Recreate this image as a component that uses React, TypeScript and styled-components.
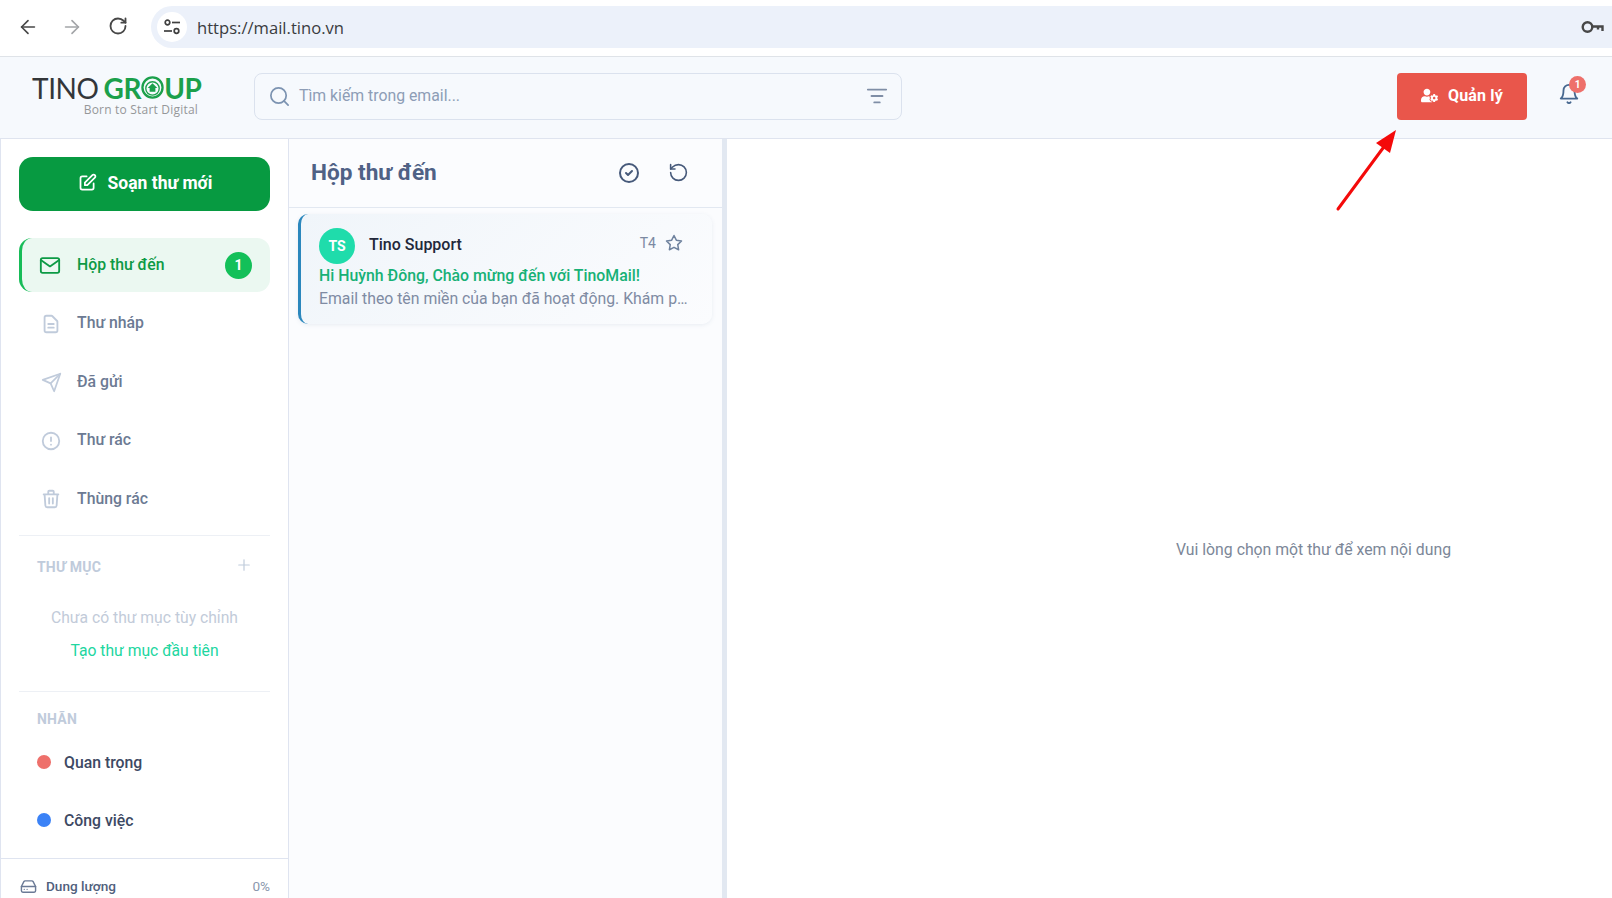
import React from "react";
import styled, { createGlobalStyle } from "styled-components";
import { ArrowLeft, ArrowRight, RotateCw, Search, ListFilter, Plus, RotateCcw } from "lucide-react";
import { FaUserCog } from "react-icons/fa";
import { FiBell, FiHardDrive, FiMail, FiSend, FiStar } from "react-icons/fi";
import {
  HiOutlineCheckCircle,
  HiOutlineDocumentText,
  HiOutlineExclamationCircle,
  HiOutlinePencilAlt,
  HiOutlineTrash,
} from "react-icons/hi";

const GlobalStyle = createGlobalStyle`
  html, body { margin: 0; padding: 0; height: 100%; overflow: hidden; background: #fff; }
  * { box-sizing: border-box; }
  body { font-family: Roboto, "Noto Sans", sans-serif; }
`;

const Page = styled.div`
  position: relative;
  width: 1612px;
  height: 898px;
  display: flex;
  flex-direction: column;
  overflow: hidden;
`;

const BrowserBar = styled.div`
  height: 57px;
  flex: none;
  display: flex;
  align-items: center;
  padding: 0 0 2px 17px;
  background: #fff;
  border-bottom: 1px solid #dfe3e8;
`;

const NavButton = styled.span<{ $muted?: boolean; $gap: number }>`
  width: 22px;
  height: 22px;
  margin-right: ${({ $gap }) => $gap}px;
  display: flex;
  color: ${({ $muted }) => ($muted ? "#a3a5a8" : "#474747")};
`;

const UrlPill = styled.div`
  flex: 1;
  height: 42px;
  display: flex;
  align-items: center;
  padding: 0 8px 0 6px;
  border-radius: 21px 0 0 21px;
  background: #ecf1fa;
`;

const SiteBadge = styled.span`
  width: 30px;
  height: 30px;
  flex: none;
  display: flex;
  align-items: center;
  justify-content: center;
  border-radius: 50%;
  background: #fff;
`;

const UrlText = styled.span`
  margin: 1px 0 0 10px;
  flex: 1;
  font-family: "Open Sans", sans-serif;
  font-size: 16.6px;
  color: #3a3c40;
`;

const Header = styled.header`
  height: 82px;
  flex: none;
  display: flex;
  align-items: center;
  padding: 0 30px 3px 32px;
  background: #f6f9fd;
  border-bottom: 1px solid #dfe4ef;
`;

const Logo = styled.div`
  width: 166px;
  flex: none;
  margin-right: 56px;
  display: flex;
  flex-direction: column;
  align-items: flex-end;
`;

const LogoMark = styled.div`
  display: flex;
  align-items: center;
  align-self: flex-start;
  height: 24px;
  font-family: Lato, sans-serif;
  font-size: 28px;
  line-height: 24px;
  letter-spacing: -0.4px;
  color: #333639;
`;

const LogoGreen = styled.span`
  display: flex;
  align-items: center;
  margin-left: 5px;
  font-weight: 700;
  color: #1ba04b;
`;

const LogoTag = styled.div`
  margin-top: 3px;
  font-family: "Open Sans", sans-serif;
  font-size: 12px;
  line-height: 14px;
  letter-spacing: 0.2px;
  color: #959799;
`;

const SearchBox = styled.div`
  width: 648px;
  height: 47px;
  display: flex;
  align-items: center;
  padding: 0 13px;
  border: 1px solid #dbe2ee;
  border-radius: 8px;
  background: #fff0;
  color: #7c93b1;
`;

const SearchText = styled.span`
  flex: 1;
  margin-left: 8px;
  margin-bottom: 1px;
  font-size: 15.8px;
  color: #8d9db6;
`;

const HeaderActions = styled.div`
  margin-left: auto;
  display: flex;
  align-items: center;
`;

const ManageButton = styled.button`
  width: 130px;
  height: 47px;
  display: flex;
  align-items: center;
  justify-content: center;
  gap: 10px;
  padding: 0 0 1px;
  border: none;
  border-radius: 4px;
  background: #e9564b;
  color: #fff;
  font-family: inherit;
  font-size: 16px;
  font-weight: 700;
  letter-spacing: 0.15px;
`;

const BellWrap = styled.div`
  position: relative;
  width: 22px;
  height: 24px;
  margin-left: 31px;
  margin-right: 2px;
  margin-bottom: 3px;
  color: #46678f;
`;

const BellBadge = styled.span`
  position: absolute;
  top: -7px;
  right: -6px;
  width: 17px;
  height: 17px;
  display: flex;
  align-items: center;
  justify-content: center;
  border-radius: 50%;
  background: #ee706b;
  color: #fff;
  font-size: 10px;
  font-weight: 700;
`;

const Body = styled.div`
  flex: 1;
  min-height: 0;
  display: flex;
`;

const Sidebar = styled.aside`
  width: 289px;
  flex: none;
  padding: 18px 18px 0 18px;
  background: #fff;
  border-left: 1px solid #dfe4f0;
  border-right: 1px solid #dfe4f0;
`;

const ComposeButton = styled.button`
  width: 251px;
  height: 54px;
  display: flex;
  align-items: center;
  justify-content: center;
  gap: 10px;
  padding: 0 0 3px;
  border: none;
  border-radius: 14px;
  background: #079a41;
  color: #fff;
  font-family: inherit;
  font-size: 17.5px;
  font-weight: 700;
`;

const NavList = styled.nav`
  margin-top: 27px;
  padding-bottom: 9px;
  display: flex;
  flex-direction: column;
  gap: 4.5px;
  border-bottom: 1px solid #edf0f5;
`;

const NavItem = styled.div<{ $active?: boolean }>`
  height: 54px;
  display: flex;
  align-items: center;
  padding: 0 18px 0 ${({ $active }) => ($active ? "17px" : "21px")};
  border-radius: 13px;
  border-left: ${({ $active }) => ($active ? "3px solid #17bc58" : "none")};
  background: ${({ $active }) => ($active ? "#ebf8f1" : "transparent")};
  color: ${({ $active }) => ($active ? "#0d9a45" : "#6c7a93")};
  font-size: 15.8px;
  font-weight: 500;
`;

const NavIcon = styled.span<{ $active?: boolean }>`
  width: 22px;
  height: 22px;
  margin-right: ${({ $active }) => ($active ? "16px" : "15px")};
  display: flex;
  align-items: center;
  justify-content: center;
  color: ${({ $active }) => ($active ? "#0d9a45" : "#c0cbdb")};
`;

const NavLabel = styled.span`
  flex: 1;
  margin-bottom: 2px;
`;

const CountBadge = styled.span`
  width: 27px;
  height: 27px;
  display: flex;
  align-items: center;
  justify-content: center;
  border-radius: 50%;
  background: #13c059;
  color: #fff;
  font-size: 14px;
  font-weight: 700;
`;

const Section = styled.section`
  border-bottom: 1px solid #edf0f5;
`;

const SectionHead = styled.div<{ $top: number }>`
  height: 20px;
  display: flex;
  align-items: center;
  justify-content: space-between;
  padding: 0 18px;
  margin-top: ${({ $top }) => $top}px;
  color: #c0cbdb;
  font-size: 14px;
  font-weight: 700;
  letter-spacing: 0.2px;
`;

const PlusIcon = styled.span`
  display: flex;
  margin: -5px -1px 0 0;
`;

const EmptyFolders = styled.div`
  margin-top: 31px;
  padding-bottom: 30px;
  display: flex;
  flex-direction: column;
  align-items: center;
  gap: 13px;
  font-size: 15.7px;
  line-height: 20px;
  color: #c2cbd9;
`;

const CreateLink = styled.span`
  color: #21d6a0;
`;

const LabelList = styled.div`
  margin-top: 4px;
  margin-bottom: 9px;
`;

const LabelRow = styled.div`
  height: 58px;
  display: flex;
  align-items: center;
  gap: 13px;
  padding: 0 18px;
  color: #3d4963;
  font-size: 15.8px;
  font-weight: 500;
`;

const LabelDot = styled.span<{ $color: string }>`
  width: 14px;
  height: 14px;
  border-radius: 50%;
  background: ${({ $color }) => $color};
`;

const StorageRow = styled.div`
  height: 56px;
  margin: 0 -18px;
  padding: 19px 18px 0 19px;
  display: flex;
  align-items: flex-start;
  gap: 9px;
  border-top: 1px solid #dfe4f0;
  color: #50607c;
  font-size: 13.6px;
  font-weight: 500;
`;

const StorageValue = styled.span`
  margin-left: auto;
  color: #8a97ad;
  font-weight: 400;
`;

const ListColumn = styled.section`
  width: 438px;
  flex: none;
  background: #fbfcfe;
  border-right: 5px solid #e2e8f1;
`;

const ListHead = styled.div`
  height: 69px;
  display: flex;
  align-items: center;
  padding: 0 32px 1px 22px;
  border-bottom: 1px solid #e2e8f1;
`;

const ListTitle = styled.h2`
  flex: 1;
  margin: 0;
  font-size: 22.6px;
  font-weight: 700;
  color: #4f6185;
`;

const HeadIcon = styled.span`
  width: 24px;
  height: 24px;
  margin-left: 25px;
  display: flex;
  align-items: center;
  justify-content: center;
  color: #46597a;
`;

const MailCard = styled.article`
  height: 110px;
  margin: 6px 10px 0 9px;
  padding: 14px 24px 0 18px;
  border-left: 3px solid #2b87bd;
  border-radius: 10px;
  background: linear-gradient(135deg, #f0f5fa, #fbfcfe);
  box-shadow: 0 1px 4px rgba(100, 120, 160, 0.12);
`;

const CardTop = styled.div`
  height: 36px;
  display: flex;
  align-items: center;
`;

const Avatar = styled.span`
  width: 36px;
  height: 36px;
  flex: none;
  margin-right: 14px;
  display: flex;
  align-items: center;
  justify-content: center;
  border-radius: 50%;
  background: #1fdcab;
  color: #fff;
  font-size: 14px;
  font-weight: 700;
`;

const Sender = styled.span`
  flex: 1;
  margin-bottom: 3px;
  font-size: 16px;
  font-weight: 500;
  color: #22283a;
`;

const MailDate = styled.span`
  margin: 0 9px 7px 0;
  font-size: 14px;
  color: #7b89a2;
`;

const StarIcon = styled.span`
  display: flex;
  margin: 0 5px 7px 0;
  color: #6f829e;
`;

const Subject = styled.div`
  margin-top: 1px;
  font-size: 15.85px;
  line-height: 22px;
  font-weight: 500;
  color: #17b176;
`;

const Preview = styled.div`
  font-size: 15.8px;
  line-height: 23px;
  white-space: nowrap;
  overflow: hidden;
  text-overflow: ellipsis;
  color: #7f8ba3;
`;

const Reader = styled.main`
  flex: 1;
  display: flex;
  align-items: center;
  justify-content: center;
  padding: 61px 0 0 288px;
  background: #fff;
  font-size: 15.8px;
  color: #7c8798;
`;

const ArrowOverlay = styled.svg`
  position: absolute;
  left: 1330px;
  top: 122px;
  pointer-events: none;
`;

const TuneIcon = () => (
  <svg width="18" height="16" viewBox="0 0 18 16" fill="none" stroke="#3f3f3f" strokeWidth="1.7">
    <circle cx="4.5" cy="3.5" r="2.3" />
    <path d="M9 3.5h8" />
    <circle cx="13.5" cy="12" r="2.3" />
    <path d="M1 12h8" />
  </svg>
);

const KeyIcon = () => (
  <svg width="23" height="14" viewBox="0 0 23 14" fill="none" stroke="#474747" strokeWidth="2.4">
    <circle cx="6.500" cy="7" r="4.800" />
    <path d="M11 6.500h10.500v4.500M17 6.500v3" />
  </svg>
);

const GroupO = () => (
  <svg width="23" height="23" viewBox="0 0 24 24" fill="none">
    <circle cx="12" cy="12" r="10.500" stroke="#1ba04b" strokeWidth="2.400" />
    <circle cx="12" cy="13" r="7" stroke="#1ba04b" strokeWidth="1.400" />
    <path d="M12 7.500l5 5h-2v4H9v-4H7z" fill="#1ba04b" />
  </svg>
);

const navItems = [
  { label: "Thư nháp", icon: <HiOutlineDocumentText size={24} /> },
  { label: "Đã gửi", icon: <FiSend size={21} /> },
  { label: "Thư rác", icon: <HiOutlineExclamationCircle size={24} /> },
  { label: "Thùng rác", icon: <HiOutlineTrash size={24} /> },
];

export default function App() {
  return (
    <Page>
      <GlobalStyle />
      <BrowserBar>
        <NavButton $gap={22}><ArrowLeft size={22} strokeWidth={1.8} /></NavButton>
        <NavButton $gap={25} $muted><ArrowRight size={22} strokeWidth={1.8} /></NavButton>
        <NavButton $gap={21}><RotateCw size={20} strokeWidth={2.2} /></NavButton>
        <UrlPill>
          <SiteBadge><TuneIcon /></SiteBadge>
          <UrlText>https://mail.tino.vn</UrlText>
          <KeyIcon />
        </UrlPill>
      </BrowserBar>

      <Header>
        <Logo>
          <LogoMark>
            TINO
            <LogoGreen>GR<GroupO />UP</LogoGreen>
          </LogoMark>
          <LogoTag>Born to Start Digital</LogoTag>
        </Logo>
        <SearchBox>
          <Search size={23} strokeWidth={1.8} />
          <SearchText>Tìm kiếm trong email...</SearchText>
          <ListFilter size={22} strokeWidth={2} color="#7f8ea6" />
        </SearchBox>
        <HeaderActions>
          <ManageButton>
            <FaUserCog size={17} />
            Quản lý
          </ManageButton>
          <BellWrap>
            <FiBell size={22} />
            <BellBadge>1</BellBadge>
          </BellWrap>
        </HeaderActions>
      </Header>

      <Body>
        <Sidebar>
          <ComposeButton>
            <HiOutlinePencilAlt size={21} />
            Soạn thư mới
          </ComposeButton>
          <NavList>
            <NavItem $active>
              <NavIcon $active><FiMail size={25} /></NavIcon>
              <NavLabel>Hộp thư đến</NavLabel>
              <CountBadge>1</CountBadge>
            </NavItem>
            {navItems.map((item) => (
              <NavItem key={item.label}>
                <NavIcon>{item.icon}</NavIcon>
                <NavLabel>{item.label}</NavLabel>
              </NavItem>
            ))}
          </NavList>
          <Section>
            <SectionHead $top={21}>
              THƯ MỤC
              <PlusIcon><Plus size={18} strokeWidth={1.6} /></PlusIcon>
            </SectionHead>
            <EmptyFolders>
              <span>Chưa có thư mục tùy chỉnh</span>
              <CreateLink>Tạo thư mục đầu tiên</CreateLink>
            </EmptyFolders>
          </Section>
          <SectionHead $top={17}>NHÃN</SectionHead>
          <LabelList>
            <LabelRow><LabelDot $color="#ee706b" />Quan trọng</LabelRow>
            <LabelRow><LabelDot $color="#3b82f6" />Công việc</LabelRow>
          </LabelList>
          <StorageRow>
            <FiHardDrive size={17} color="#6b7a96" />
            Dung lượng
            <StorageValue>0%</StorageValue>
          </StorageRow>
        </Sidebar>

        <ListColumn>
          <ListHead>
            <ListTitle>Hộp thư đến</ListTitle>
            <HeadIcon><HiOutlineCheckCircle size={24} /></HeadIcon>
            <HeadIcon><RotateCcw size={21} strokeWidth={1.8} /></HeadIcon>
          </ListHead>
          <MailCard>
            <CardTop>
              <Avatar>TS</Avatar>
              <Sender>Tino Support</Sender>
              <MailDate>T4</MailDate>
              <StarIcon><FiStar size={18} /></StarIcon>
            </CardTop>
            <Subject>Hi Huỳnh Đông, Chào mừng đến với TinoMail!</Subject>
            <Preview>Email theo tên miền của bạn đã hoạt động. Khám phá ngay các tính năng</Preview>
          </MailCard>
        </ListColumn>

        <Reader>Vui lòng chọn một thư để xem nội dung</Reader>
      </Body>

      <ArrowOverlay width="72" height="90" viewBox="0 0 72 90">
        <path d="M8 87L56 22" stroke="#f40a0a" strokeWidth="3" strokeLinecap="round" />
        <path d="M66 8L46 21l14 10z" fill="#f40a0a" />
      </ArrowOverlay>
    </Page>
  );
}
